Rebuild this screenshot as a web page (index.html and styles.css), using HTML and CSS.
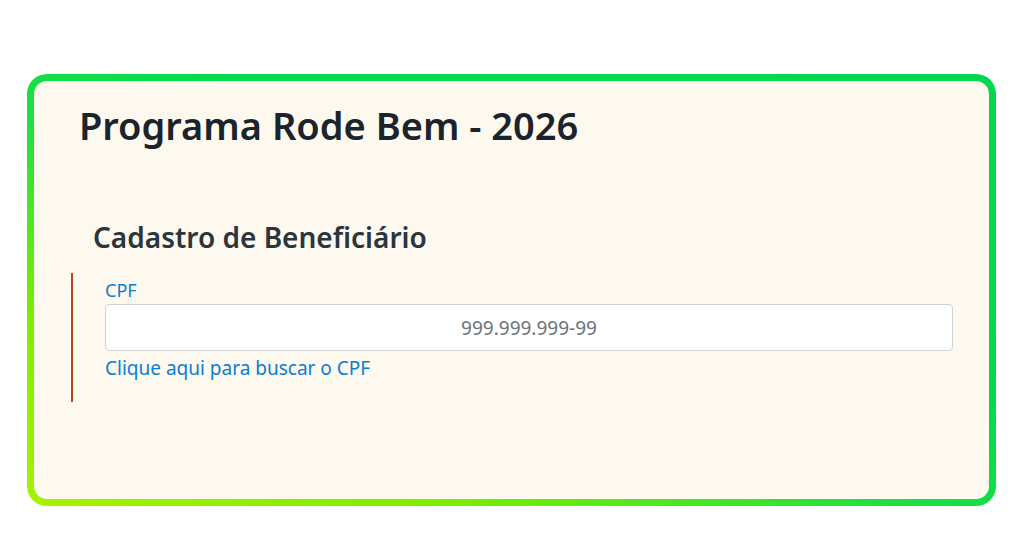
FILE: index.html
```html
<!DOCTYPE html>
<html lang="pt-BR">
<head>
    <meta charset="UTF-8">
    <meta name="viewport" content="width=device-width, initial-scale=1.0">
    <link rel="stylesheet" href="styles.css">
    <title>Programa Rode Bem - 2026</title>
</head>
<body>
  <div class="frame">
    <div class="card">
      <h1 class="title">Programa Rode Bem - 2026</h1>
      <h2 class="subtitle">Cadastro de Beneficiário</h2>
      <div class="formBlock">
        <label class="fieldLabel" for="cpf">CPF</label>
        <input type="text" id="cpf" name="cpf" class="cpfInput" placeholder="999.999.999-99">
        <a class="searchLink" href="#">Clique aqui para buscar o CPF</a>
      </div>
    </div>
  </div>
</body>
</html>
```

FILE: styles.css
```css
body {
  margin: 0;
  background-color: #fff;
  font-family: "Noto Sans", "Open Sans", Arial, sans-serif;
}

.frame {
  margin: 74px 0 0 27px;
  width: 969px;
  height: 432px;
  box-sizing: border-box;
  padding: 7px;
  border-radius: 20px;
  background: linear-gradient(to top right, #a8f200 0%, #7cee00 22%, #1ee040 45%, #00dc4e 60%, #00d94f 100%);
}

.card {
  height: 100%;
  box-sizing: border-box;
  background-color: #fdf9ee;
  border-radius: 13px;
  padding: 20px 36px 0 37px;
}

.title {
  margin: 0 0 0 8px;
  font-size: 38px;
  font-weight: 600;
  line-height: 48px;
  color: #1b232c;
}

.subtitle {
  margin: 70px 0 18px 22px;
  font-size: 28px;
  font-weight: 600;
  line-height: 36px;
  color: #2a353e;
}

.formBlock {
  border-left: 2px solid #b5461e;
  padding: 5px 0 17px 32px;
  display: flex;
  flex-direction: column;
}

.fieldLabel {
  color: #0a7dd6;
  font-size: 18px;
  line-height: 24px;
  margin-bottom: 2px;
}

.cpfInput {
  height: 47px;
  box-sizing: border-box;
  border: 1px solid #ced4da;
  border-radius: 4px;
  background: #fff;
  text-align: center;
  font-family: inherit;
  font-size: 19px;
  color: #495057;
}

.cpfInput::placeholder {
  color: #6c757d;
}

.searchLink {
  color: #0a7dd6;
  font-size: 19px;
  line-height: 34px;
  text-decoration: none;
}
```
